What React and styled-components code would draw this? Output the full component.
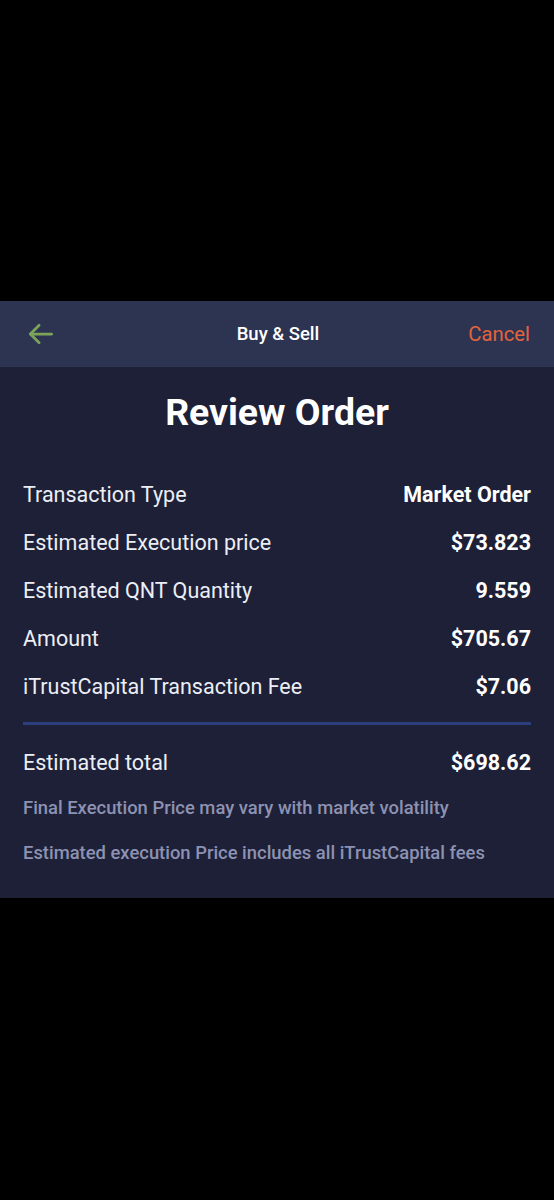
import React from "react";
import styled, { createGlobalStyle } from "styled-components";

const GlobalStyle = createGlobalStyle`
  html, body {
    margin: 0;
    padding: 0;
    background: #000;
  }
  body {
    font-family: Roboto, "Noto Sans", "Liberation Sans", sans-serif;
  }
`;

const Screen = styled.div`
  min-height: 1200px;
  padding-top: 301px;
  box-sizing: border-box;
  background: #000;
`;

const Panel = styled.section`
  background: #1d2037;
`;

const Header = styled.header`
  height: 66px;
  background: #2d3451;
  display: grid;
  grid-template-columns: 1fr auto 1fr;
  align-items: center;
  padding: 0 24px 0 26px;
`;

const BackButton = styled.button`
  justify-self: start;
  background: none;
  border: none;
  padding: 0;
  display: flex;
  align-items: center;
  cursor: pointer;
`;

const HeaderTitle = styled.h1`
  margin: 0;
  font-size: 18.5px;
  font-weight: 500;
  color: #fff;
`;

const CancelLink = styled.button`
  justify-self: end;
  background: none;
  border: none;
  padding: 0;
  font-family: inherit;
  font-size: 20.3px;
  font-weight: 400;
  color: #e2633f;
  cursor: pointer;
`;

const Body = styled.div`
  padding: 24px 23px 33px;
`;

const Title = styled.h2`
  margin: 0 0 37px;
  text-align: center;
  font-size: 37.4px;
  line-height: 42px;
  font-weight: 700;
  color: #fff;
`;

const Row = styled.div`
  display: flex;
  justify-content: space-between;
  align-items: center;
  height: 48px;
  font-size: 21.5px;
  color: #eceef5;
`;

const Value = styled.span`
  font-weight: 700;
  color: #fff;
`;

const Divider = styled.hr`
  margin: 12px 0 13px;
  border: none;
  height: 3px;
  background: #2b3f7c;
`;

const Note = styled.p`
  margin: ${(p) => p.$top}px 0 0;
  font-size: 18.4px;
  line-height: 24px;
  font-weight: 500;
  color: #8d92b2;
`;

const rows = [
  ["Transaction Type", "Market Order"],
  ["Estimated Execution price", "$73.823"],
  ["Estimated QNT Quantity", "9.559"],
  ["Amount", "$705.67"],
  ["iTrustCapital Transaction Fee", "$7.06"],
];

const BackArrow = () => (
  <svg width="30" height="30" viewBox="0 0 24 24" fill="none" stroke="#7ba35a" strokeWidth="2.2" strokeLinecap="round" strokeLinejoin="round">
    <path d="M20.5 12H3.5" />
    <path d="M10.5 5l-7 7 7 7" />
  </svg>
);

export default function App() {
  return (
    <Screen>
      <GlobalStyle />
      <Panel>
        <Header>
          <BackButton aria-label="Back">
            <BackArrow />
          </BackButton>
          <HeaderTitle>Buy &amp; Sell</HeaderTitle>
          <CancelLink>Cancel</CancelLink>
        </Header>
        <Body>
          <Title>Review Order</Title>
          {rows.map(([label, value]) => (
            <Row key={label}>
              <span>{label}</span>
              <Value>{value}</Value>
            </Row>
          ))}
          <Divider />
          <Row>
            <span>Estimated total</span>
            <Value>$698.62</Value>
          </Row>
          <Note $top={10}>Final Execution Price may vary with market volatility</Note>
          <Note $top={21}>Estimated execution Price includes all iTrustCapital fees</Note>
        </Body>
      </Panel>
    </Screen>
  );
}
